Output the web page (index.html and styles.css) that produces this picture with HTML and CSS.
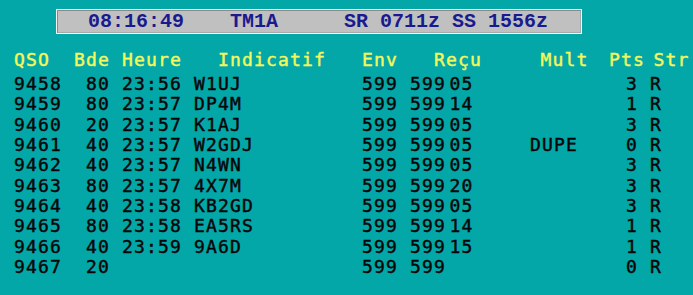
FILE: index.html
```html
<!DOCTYPE html>
<html lang="fr">
<head>
<meta charset="utf-8">
<title>TM1A log</title>
<link rel="stylesheet" href="styles.css">
</head>
<body>
<div class="topbar">
  <span class="clock">08:16:49</span>
  <span class="call">TM1A</span>
  <span class="sun">SR 0711z SS 1556z</span>
</div>
<div class="log">
  <div class="head">
    <span>QSO</span><span>Bde</span><span>Heure</span><span>Indicatif</span><span>Env</span><span>Reçu</span><span>Mult</span><span>Pts</span><span>Str</span>
  </div>
  <div class="row"><span>9458</span><span>80</span><span>23:56</span><span>W1UJ</span><span>599</span><span>599</span><span>05</span><span></span><span>3</span><span>R</span></div>
  <div class="row"><span>9459</span><span>80</span><span>23:57</span><span>DP4M</span><span>599</span><span>599</span><span>14</span><span></span><span>1</span><span>R</span></div>
  <div class="row"><span>9460</span><span>20</span><span>23:57</span><span>K1AJ</span><span>599</span><span>599</span><span>05</span><span></span><span>3</span><span>R</span></div>
  <div class="row"><span>9461</span><span>40</span><span>23:57</span><span>W2GDJ</span><span>599</span><span>599</span><span>05</span><span>DUPE</span><span>0</span><span>R</span></div>
  <div class="row"><span>9462</span><span>40</span><span>23:57</span><span>N4WN</span><span>599</span><span>599</span><span>05</span><span></span><span>3</span><span>R</span></div>
  <div class="row"><span>9463</span><span>80</span><span>23:57</span><span>4X7M</span><span>599</span><span>599</span><span>20</span><span></span><span>3</span><span>R</span></div>
  <div class="row"><span>9464</span><span>40</span><span>23:58</span><span>KB2GD</span><span>599</span><span>599</span><span>05</span><span></span><span>3</span><span>R</span></div>
  <div class="row"><span>9465</span><span>80</span><span>23:58</span><span>EA5RS</span><span>599</span><span>599</span><span>14</span><span></span><span>1</span><span>R</span></div>
  <div class="row"><span>9466</span><span>40</span><span>23:59</span><span>9A6D</span><span>599</span><span>599</span><span>15</span><span></span><span>1</span><span>R</span></div>
  <div class="row"><span>9467</span><span>20</span><span></span><span></span><span>599</span><span>599</span><span></span><span></span><span>0</span><span>R</span></div>
</div>
</body>
</html>
```

FILE: styles.css
```css
html, body {
  margin: 0;
  padding: 0;
  overflow: hidden;
}
body {
  background: #03a7a7;
  width: 693px;
  height: 295px;
  white-space: nowrap;
}
.topbar {
  box-sizing: border-box;
  margin: 9px 0 0 56px;
  width: 526px;
  height: 25px;
  background: #c0c0c0;
  border: 1px solid #f4f4f4;
  box-shadow: inset 1px 1px 0 #8a8a8a, inset -1px -1px 0 #a8a8a8;
  display: flex;
  align-items: center;
  font-family: "Liberation Mono", monospace;
  font-weight: bold;
  font-size: 20px;
  line-height: 20px;
  color: #1a1a8e;
}
.clock { margin-left: 31px; }
.call { margin-left: 46px; }
.sun { margin-left: 66px; }
.log {
  margin-top: 15.7px;
  font-family: "DejaVu Sans Mono", monospace;
  font-weight: normal;
  font-size: 18px;
  letter-spacing: 1.16px;
  line-height: 20.3px;
  -webkit-text-stroke: 0.45px currentColor;
}
.head {
  display: grid;
  grid-template-columns: 60px 48px 96px 144px 72px 106.5px 68.5px 44.5px auto;
  padding-left: 14px;
  color: #f4f85a;
  margin-bottom: 4.2px;
}
.row {
  display: grid;
  grid-template-columns: 72px 36px 72px 168px 48px 39.5px 80.5px 96px 24px auto;
  padding-left: 14px;
  color: #060608;
  height: 20.3px;
}
```
